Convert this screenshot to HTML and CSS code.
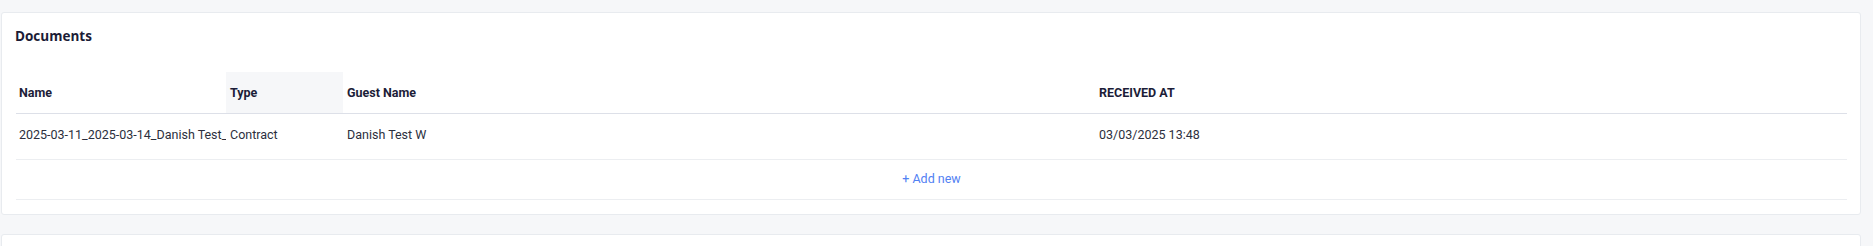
FILE: index.html
```html
<!DOCTYPE html>
<html>
<head>
<meta charset="utf-8">
<link rel="stylesheet" href="styles.css">
</head>
<body>
<div class="page">
  <section class="card">
    <h2 class="card-title">Documents</h2>
    <div class="table">
      <div class="row head">
        <div class="cell">Name</div>
        <div class="cell sorted">Type</div>
        <div class="cell">Guest Name</div>
        <div class="cell">RECEIVED AT</div>
      </div>
      <div class="row body">
        <div class="cell clip">2025-03-11_2025-03-14_Danish Test_W.pdf</div>
        <div class="cell">Contract</div>
        <div class="cell">Danish Test W</div>
        <div class="cell">03/03/2025 13:48</div>
      </div>
      <div class="add-row"><span class="add-link">+ Add new</span></div>
    </div>
  </section>
  <section class="card next"></section>
</div>
</body>
</html>
```

FILE: styles.css
```css
* { box-sizing: border-box; }
html, body { margin: 0; padding: 0; }
body {
  background: #f6f7f9;
  font-family: Roboto, "Liberation Sans", sans-serif;
  overflow: hidden;
}
.page {
  padding: 12px 12px 0 1px;
  display: flex;
  flex-direction: column;
  gap: 19px;
}
.card {
  background: #fff;
  border: 1px solid #e8ebef;
  border-radius: 3px;
  padding: 13px 13px 14px 14px;
}
.card.next { height: 60px; }
.card-title {
  margin: 0 0 26px -1px;
  font-family: "Open Sans", "Noto Sans", sans-serif;
  font-weight: 700;
  font-size: 13.5px;
  line-height: 20px;
  color: #1b1c36;
}
.row {
  display: grid;
  grid-template-columns: 210px 117px 1fr 1fr;
}
.cell {
  padding: 0 0 0 4px;
  white-space: nowrap;
  overflow: hidden;
  display: flex;
  align-items: center;
}
.row .cell:first-child { padding-left: 3px; }
.head {
  height: 42px;
  border-bottom: 1px solid #dde0e8;
  font-size: 12.5px;
  font-weight: 700;
  color: #1c1d38;
}
.head .sorted { background: #f6f7f9; }
.body {
  height: 46px;
  border-bottom: 1px solid #eceef1;
  font-size: 12.5px;
  color: #2c2f3d;
}
.body .cell { padding-bottom: 4px; }
.add-row {
  height: 40px;
  padding-bottom: 2px;
  border-bottom: 1px solid #eceef1;
  display: flex;
  align-items: center;
  justify-content: center;
}
.add-link {
  font-size: 12.5px;
  color: #5281f3;
  cursor: pointer;
}
```
